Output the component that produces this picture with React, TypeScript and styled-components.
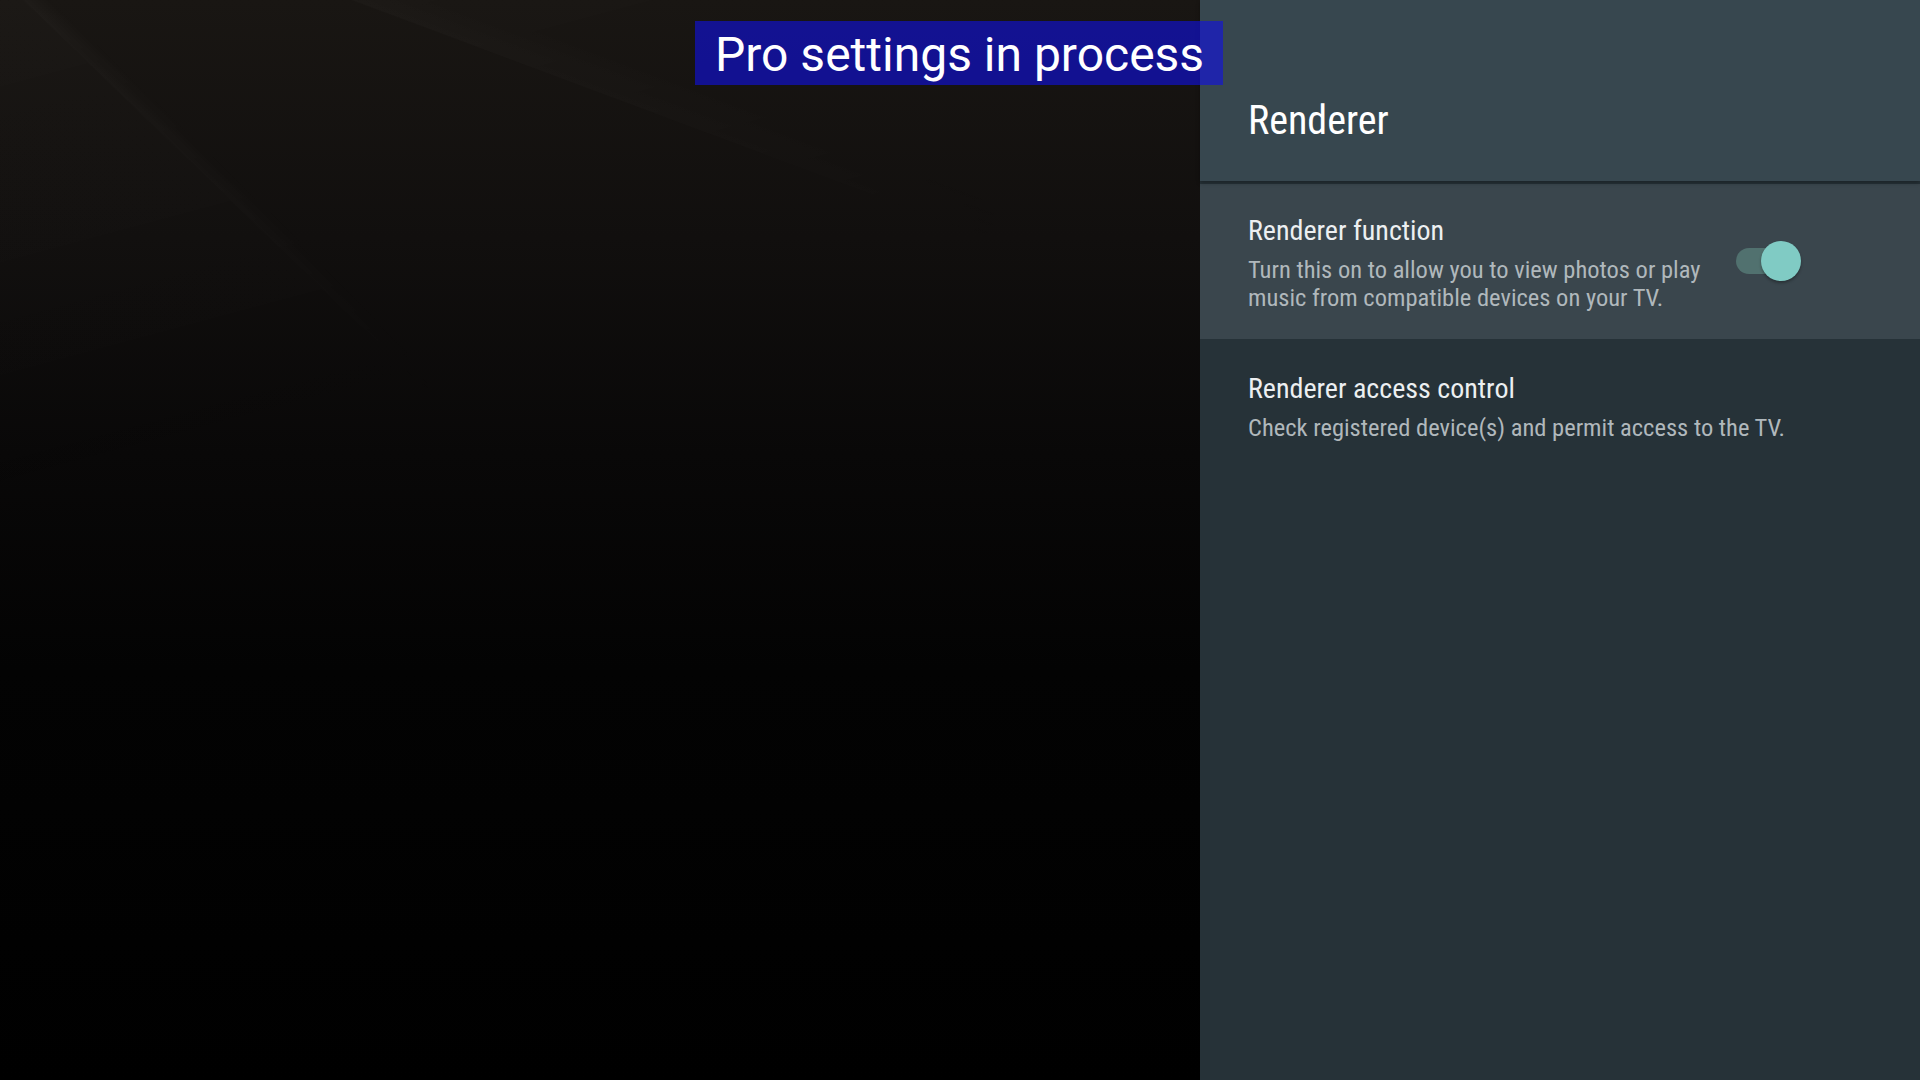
import React from "react";
import styled, { createGlobalStyle } from "styled-components";

const Global = createGlobalStyle`
  html, body { margin: 0; padding: 0; background: #000; }
  body { font-family: Roboto, "Noto Sans", sans-serif; }
`;

const Screen = styled.div`
  position: relative;
  width: 1920px;
  height: 1080px;
  display: flex;
  overflow: hidden;
`;

const Backdrop = styled.div`
  position: relative;
  flex: 0 0 1200px;
  height: 100%;
  background: linear-gradient(180deg, #191613 0%, #110f0e 22%, #090808 42%, #030303 62%, #000 100%);

  &::before {
    content: "";
    position: absolute;
    inset: 0;
    background:
      linear-gradient(20.5deg, transparent 0%, transparent 79.2%, rgba(255,255,255,0.022) 79.3%, rgba(255,255,255,0.008) 82%, rgba(255,255,255,0.008) 100%),
      linear-gradient(44deg, rgba(255,255,255,0.01) 0%, rgba(255,255,255,0.014) 49.2%, rgba(255,255,255,0.026) 49.3%, transparent 50.5%, transparent 100%);
    -webkit-mask-image: linear-gradient(165deg, #000 0%, rgba(0,0,0,0.6) 20%, transparent 38%);
    mask-image: linear-gradient(165deg, #000 0%, rgba(0,0,0,0.6) 20%, transparent 38%);
  }
`;

const Banner = styled.div`
  position: absolute;
  left: 695px;
  top: 21px;
  width: 528px;
  height: 64px;
  box-sizing: border-box;
  background: rgba(16, 16, 225, 0.62);
  color: #fff;
  font-family: Roboto, sans-serif;
  font-size: 48px;
  line-height: 62px;
  padding: 3px 0 0 20px;
  white-space: nowrap;
  z-index: 2;
`;

const Panel = styled.div`
  flex: 1 1 auto;
  height: 100%;
  background: #263238;
  display: flex;
  flex-direction: column;
  font-family: Roboto, sans-serif;
  font-stretch: condensed;
`;

const Header = styled.div`
  height: 181px;
  background: #37474f;
  box-sizing: border-box;
  padding: 101px 48px 0 48px;
  box-shadow: 0 2px 4px rgba(0, 0, 0, 0.3);
  position: relative;
  z-index: 1;
`;

const Title = styled.h1`
  margin: 0;
  font-weight: 400;
  font-size: 40px;
  line-height: 40px;
  color: #ffffff;
  font-stretch: condensed;
`;

const Row = styled.div<{ $focused?: boolean }>`
  display: flex;
  align-items: center;
  background: ${(p) => (p.$focused ? "#3a464d" : "transparent")};
  padding: ${(p) => (p.$focused ? "31px 119px 27px 48px" : "34px 48px 30px 48px")};
  margin-top: ${(p) => (p.$focused ? "3px" : "0")};
`;

const TextCol = styled.div<{ $width?: number }>`
  flex: ${(p) => (p.$width ? `0 0 ${p.$width}px` : "1 1 auto")};
  display: flex;
  flex-direction: column;
  gap: 9px;
`;

const ItemTitle = styled.div`
  font-size: 28px;
  line-height: 32px;
  color: #eceff1;
  font-stretch: condensed;
`;

const ItemDesc = styled.div`
  font-size: 24.5px;
  line-height: 28px;
  color: #b0b8bc;
  font-stretch: condensed;
`;

const Switch = styled.div`
  position: relative;
  width: 65px;
  height: 40px;
  flex: 0 0 65px;
  margin-left: auto;
  margin-bottom: 6px;
`;

const Track = styled.div`
  position: absolute;
  left: 0;
  top: 7px;
  width: 54px;
  height: 26px;
  border-radius: 13px;
  background: #51716f;
`;

const Thumb = styled.div`
  position: absolute;
  right: 0;
  top: 0;
  width: 40px;
  height: 40px;
  border-radius: 50%;
  background: #80cbc4;
  box-shadow: 0 2px 3px rgba(0, 0, 0, 0.3);
`;

export default function App() {
  return (
    <>
      <Global />
      <Screen>
        <Backdrop />
        <Banner>Pro settings in process</Banner>
        <Panel>
          <Header>
            <Title>Renderer</Title>
          </Header>
          <Row $focused>
            <TextCol $width={460}>
              <ItemTitle>Renderer function</ItemTitle>
              <ItemDesc>
                Turn this on to allow you to view photos or play music from compatible devices on your TV.
              </ItemDesc>
            </TextCol>
            <Switch>
              <Track />
              <Thumb />
            </Switch>
          </Row>
          <Row>
            <TextCol>
              <ItemTitle>Renderer access control</ItemTitle>
              <ItemDesc>Check registered device(s) and permit access to the TV.</ItemDesc>
            </TextCol>
          </Row>
        </Panel>
      </Screen>
    </>
  );
}
